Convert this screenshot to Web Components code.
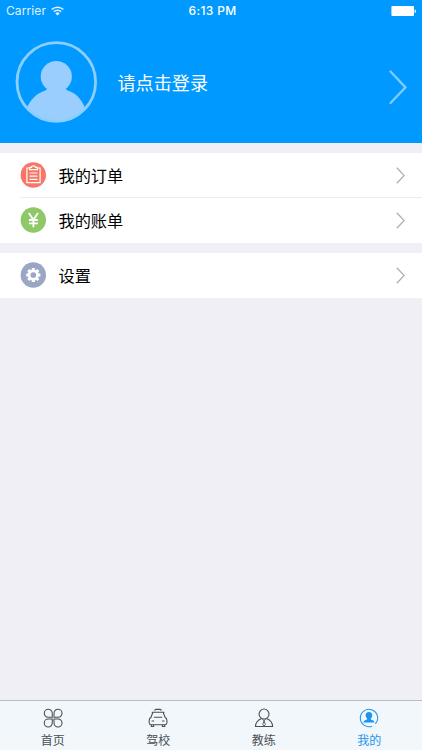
<!DOCTYPE html>
<html lang="zh-CN">
<head>
<meta charset="utf-8">
<meta name="viewport" content="width=device-width, initial-scale=1">
<title>我的</title>
<style>
  html, body {
    margin: 0;
    height: 100%;
    overflow: hidden;
  }

  body {
    font-family: Inter, "Noto Sans CJK SC", sans-serif;
    background: #efeff5;
  }
</style>
</head>
<body>
<profile-page></profile-page>

<script>
class StatusBar extends HTMLElement {
  constructor() {
    super();
    this.attachShadow({ mode: "open" });
  }

  static get styles() {
    return /* css */`
      :host {
        display: grid;
        grid-template-columns: 1fr auto 1fr;
        align-items: center;
        height: 22px;
        padding: 0 5px 0 6px;
        color: #fff;
        font-size: 12px;
        line-height: 22px;
      }

      .left {
        display: flex;
        align-items: center;
        gap: 5px;
        letter-spacing: .1px;
        opacity: .88;
      }

      .time {
        font-weight: 500;
        letter-spacing: .35px;
        padding-left: 2px;
      }

      svg {
        display: block;
      }

      .battery {
        justify-self: end;
      }
    `;
  }

  connectedCallback() {
    this.shadowRoot.innerHTML = /* html */`
    <style>${StatusBar.styles}</style>
    <div class="left">
      <span>Carrier</span>
      <svg width="13" height="10" viewBox="0 0 13 10" fill="none" stroke="#fff" stroke-width="1.6">
        <path d="M.7 3.5a8.4 8.4 0 0 1 11.6 0M2.8 5.7a5.3 5.3 0 0 1 7.4 0"/>
        <path d="M6.5 9.6 4.3 7.4a3.2 3.2 0 0 1 4.4 0z" fill="#fff" stroke="none"/>
      </svg>
    </div>
    <span class="time">${this.getAttribute("time")}</span>
    <svg class="battery" width="26" height="11" viewBox="0 0 26 11" fill="#fff">
      <rect x=".4" y=".1" width="22.6" height="10" rx="1"/>
      <path d="M23.7 3.3c1.8.6 1.8 3.4 0 4z"/>
    </svg>`;
  }
}

class ProfileHeader extends HTMLElement {
  constructor() {
    super();
    this.attachShadow({ mode: "open" });
  }

  static get styles() {
    return /* css */`
      :host {
        display: block;
        height: 142.5px;
        background: #0099ff;
        color: #fff;
      }

      .row {
        display: flex;
        align-items: center;
        height: 120px;
        padding: 0 15px;
      }

      .name {
        flex: 1;
        margin-left: 20.5px;
        padding-top: 1px;
        font-size: 18.1px;
        line-height: 26px;
      }

      svg {
        display: block;
      }

      .arrow {
        margin-top: 10px;
      }
    `;
  }

  connectedCallback() {
    this.shadowRoot.innerHTML = /* html */`
    <style>${ProfileHeader.styles}</style>
    <status-bar time="6:13 PM"></status-bar>
    <div class="row">
      <svg width="82" height="82" viewBox="0 0 82 82">
        <clipPath id="disc"><circle cx="41.3" cy="41" r="39.5"/></clipPath>
        <g fill="#99ceff" clip-path="url(#disc)">
          <circle cx="41.3" cy="35.5" r="15.6"/>
          <path d="M33 45h17c0 3 1.5 4 4 5 8 3 13 9 16 17v15H12V67c3-8 9-14 17-17 2.500-1 4-2 4-5z"/>
        </g>
        <circle cx="41.3" cy="41" r="39.3" fill="none" stroke="#8ccfff" stroke-width="2.8"/>
      </svg>
      <div class="name"><slot></slot></div>
      <svg class="arrow" width="19" height="36" viewBox="0 0 19 36" fill="none" stroke="#7dcaff" stroke-width="2.4" stroke-linecap="round">
        <path d="M2.5 2.5 17.5 18.3 2.5 34"/>
      </svg>
    </div>`;
  }
}

class MenuGroup extends HTMLElement {
  constructor() {
    super();
    this.attachShadow({ mode: "open" });
  }

  static get styles() {
    return /* css */`
      :host {
        display: block;
        margin-top: 10px;
        background: #fff;
      }

      ::slotted(menu-row:not(:last-child)) {
        --line: #ededf0;
      }
    `;
  }

  connectedCallback() {
    this.shadowRoot.innerHTML = /* html */`
    <style>${MenuGroup.styles}</style>
    <slot></slot>`;
  }
}

const menuIcons = {
  order: /* html */`
    <circle cx="13" cy="13" r="12.7" fill="#f97566"/>
    <g fill="none" stroke="#fff" stroke-width="1.2">
      <path d="M9.3 6H6.6v14.6h13.2V6h-2.7"/>
      <path d="M9.4 7.700h7.600V5.400h-1.800c-.2-2.100-3.800-2.100-4 0H9.400z"/>
      <path d="M9.300 11h7.800M9.300 14.200h7.800M9.300 17.400h7.800"/>
    </g>`,
  bill: /* html */`
    <circle cx="13" cy="13" r="12.7" fill="#8fc868"/>
    <path d="M8.500 6 13.100 12.800 17.700 6M13.100 12.500v7.800M8.600 13h9M8.600 16.300h9" fill="none" stroke="#fff" stroke-width="1.8"/>`,
  settings: /* html */`
    <circle cx="13" cy="13" r="12.7" fill="#9aa6c4"/>
    <circle cx="13" cy="13" r="4.200" fill="none" stroke="#fff" stroke-width="2.700"/>
    <g stroke="#fff" stroke-width="3">
      <path id="tooth" d="M13 5.900V9M13 17v3.100"/>
      <use href="#tooth" transform="rotate(45 13 13)"/>
      <use href="#tooth" transform="rotate(90 13 13)"/>
      <use href="#tooth" transform="rotate(135 13 13)"/>
    </g>`
};

class MenuRow extends HTMLElement {
  constructor() {
    super();
    this.attachShadow({ mode: "open" });
  }

  static get styles() {
    return /* css */`
      :host {
        display: block;
        padding-left: 20px;
      }

      .row {
        display: flex;
        align-items: center;
        box-sizing: border-box;
        height: 45px;
        padding-top: 1px;
        padding-right: 17px;
        border-bottom: 1px solid var(--line, transparent);
      }

      .label {
        flex: 1;
        margin-left: 12.5px;
        padding-top: 1px;
        color: #000;
        font-size: 16.2px;
        line-height: 24px;
      }

      svg {
        display: block;
      }
    `;
  }

  connectedCallback() {
    this.shadowRoot.innerHTML = /* html */`
    <style>${MenuRow.styles}</style>
    <div class="row">
      <svg width="26" height="26" viewBox="-.3 0 26 26">${menuIcons[this.getAttribute("icon")]}</svg>
      <span class="label"><slot></slot></span>
      <svg width="9" height="17" viewBox="0 0 9 17" fill="none" stroke="#b0b0b4" stroke-width="1.3">
        <path d="M.8.8 8.200 8.500.8 16.200"/>
      </svg>
    </div>`;
  }
}

const tabIcons = {
  home: /* html */`
    <path d="M9.500 9.500H5.400A4.100 4.100 0 1 1 9.500 5.400zM11.300 9.500V5.400a4.100 4.100 0 1 1 4.100 4.100zM9.500 11.300v4.100a4.100 4.100 0 1 1-4.100-4.100zM11.300 11.300h4.100a4.100 4.100 0 1 1-4.100 4.100z"/>`,
  school: /* html */`
    <path d="M7 2.800c0-1 .4-1.400 1.300-1.400h4c.9 0 1.300.4 1.300 1.400M3.800 4.400h13M5 4.400 3.100 9.500c-1.300.8-1.900 1.700-1.900 3.300v2.400c0 1.200.6 1.900 1.800 1.900h14.600c1.200 0 1.800-.7 1.800-1.900v-2.400c0-1.600-.6-2.500-1.900-3.300L15.600 4.400"/>
    <path d="M3.400 17.100v1.900h2.400v-1.900M14.800 17.100v1.900h2.400v-1.900M6 9.500h8.600M3.700 13.400h2.500M14.400 13.400h2.500"/>`,
  coach: /* html */`
    <circle cx="10.300" cy="6.200" r="5.100"/>
    <path d="M7.400 11C3.900 12.300 1.700 14.900 1.500 19h17.600c-.2-4.100-2.400-6.700-5.900-8"/>
    <path d="m8.500 11.500 1.800 1.400 1.800-1.400M10.300 12.900 9 17l1.300 1.600 1.300-1.600z" stroke-width=".9"/>`,
  mine: /* html */`
    <path d="M13.400 18.600A8.900 8.900 0 1 1 16.800 16.300"/>
    <path d="M10.200 4c-2.300 0-3.500 1.500-3.400 3.500.1 1.500.7 2.600 1.500 3.300v.9c-1.800.6-3.500 1-3.800 3.100h11.400c-.3-2.100-2-2.500-3.800-3.100v-.9c.8-.7 1.400-1.800 1.500-3.300.1-2-1.100-3.500-3.400-3.500z" fill="currentColor" stroke="none"/>`
};

class TabItem extends HTMLElement {
  constructor() {
    super();
    this.attachShadow({ mode: "open" });
  }

  static get styles() {
    return /* css */`
      :host {
        display: flex;
        flex: 1;
        flex-direction: column;
        align-items: center;
        padding-top: 7px;
        color: #4b4f54;
        font-size: 12px;
        line-height: 18px;
      }

      :host([active]) {
        color: #1b95ef;
      }

      svg {
        display: block;
        margin-bottom: 4px;
      }
    `;
  }

  connectedCallback() {
    this.shadowRoot.innerHTML = /* html */`
    <style>${TabItem.styles}</style>
    <svg width="20" height="20" viewBox="0 0 20.500 20.500" fill="none" stroke="currentColor" stroke-width="1.1">${tabIcons[this.getAttribute("icon")]}</svg>
    <slot></slot>`;
  }
}

class TabBar extends HTMLElement {
  constructor() {
    super();
    this.attachShadow({ mode: "open" });
  }

  static get styles() {
    return /* css */`
      :host {
        display: flex;
        box-sizing: border-box;
        height: 50px;
        border-top: 1px solid #b8bec6;
        background: #f1f7fb;
      }
    `;
  }

  connectedCallback() {
    this.shadowRoot.innerHTML = /* html */`
    <style>${TabBar.styles}</style>
    <slot></slot>`;
  }
}

class ProfilePage extends HTMLElement {
  constructor() {
    super();
    this.attachShadow({ mode: "open" });
  }

  static get styles() {
    return /* css */`
      :host {
        display: flex;
        flex-direction: column;
        height: 100vh;
      }

      main {
        flex: 1;
      }
    `;
  }

  connectedCallback() {
    this.shadowRoot.innerHTML = /* html */`
    <style>${ProfilePage.styles}</style>
    <profile-header>请点击登录</profile-header>
    <main>
      <menu-group>
        <menu-row icon="order">我的订单</menu-row>
        <menu-row icon="bill">我的账单</menu-row>
      </menu-group>
      <menu-group>
        <menu-row icon="settings">设置</menu-row>
      </menu-group>
    </main>
    <tab-bar>
      <tab-item icon="home">首页</tab-item>
      <tab-item icon="school">驾校</tab-item>
      <tab-item icon="coach">教练</tab-item>
      <tab-item icon="mine" active>我的</tab-item>
    </tab-bar>`;
  }
}

customElements.define("status-bar", StatusBar);
customElements.define("profile-header", ProfileHeader);
customElements.define("menu-group", MenuGroup);
customElements.define("menu-row", MenuRow);
customElements.define("tab-item", TabItem);
customElements.define("tab-bar", TabBar);
customElements.define("profile-page", ProfilePage);
</script>
</body>
</html>
